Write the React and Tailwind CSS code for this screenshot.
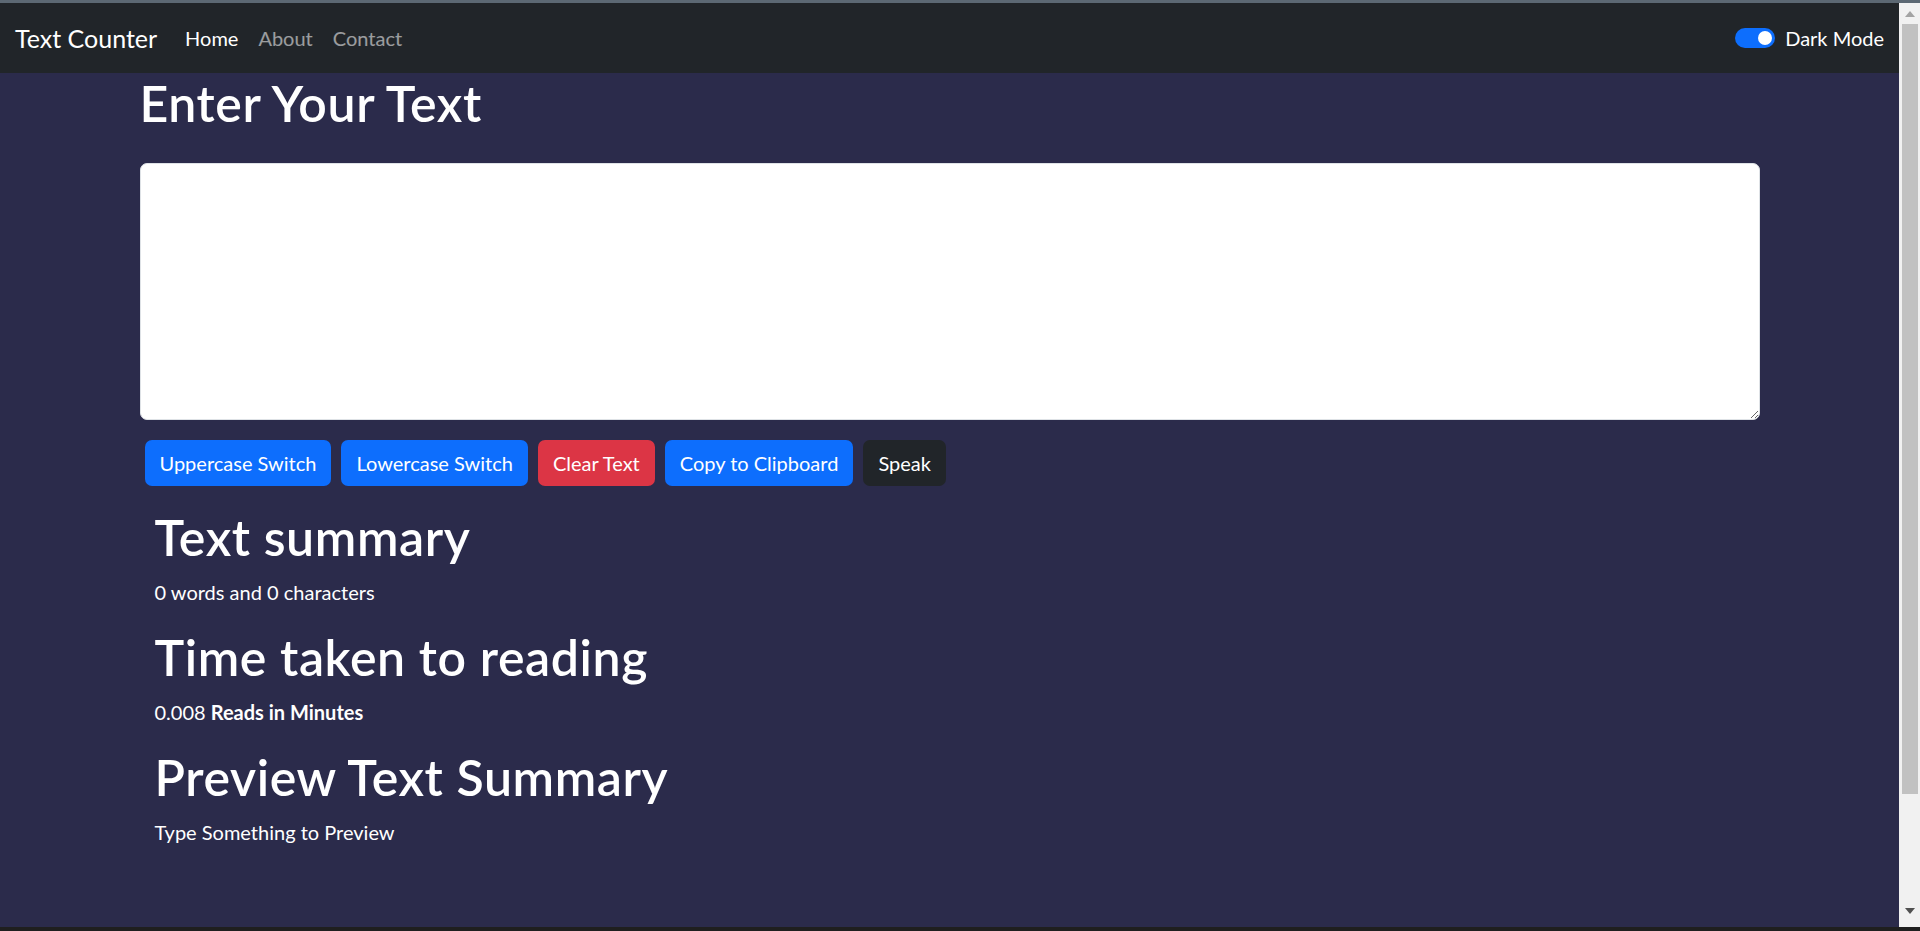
import React, { useState } from "react";

const font = { fontFamily: 'Lato, "Open Sans", sans-serif' };

const buttons = [
  { label: "Uppercase Switch", cls: "bg-[#0d6efd]" },
  { label: "Lowercase Switch", cls: "bg-[#0d6efd]" },
  { label: "Clear Text", cls: "bg-[#dc3545]" },
  { label: "Copy to Clipboard", cls: "bg-[#0d6efd]" },
  { label: "Speak", cls: "bg-[#212529]" },
];

function Navbar() {
  return (
    <nav className="h-[70px] bg-[#212529] flex items-center justify-between px-[15px]">
      <div className="flex items-center">
        <a className="text-[25px] text-white leading-[37px] mr-[18px]">Text Counter</a>
        <ul className="flex items-center text-[20px] leading-[30px]">
          <li className="px-[10px] text-white">Home</li>
          <li className="px-[10px] text-white/55">About</li>
          <li className="px-[10px] text-white/55">Contact</li>
        </ul>
      </div>
      <label className="flex items-center gap-[10px] text-[20px] text-white leading-[30px]">
        <span className="w-[40px] h-[20px] rounded-full bg-[#0d6efd] flex items-center justify-end px-[3px]">
          <span className="w-[14px] h-[14px] rounded-full bg-white" />
        </span>
        Dark Mode
      </label>
    </nav>
  );
}

function Scrollbar() {
  return (
    <div className="w-[21px] bg-[#f1f1f1] flex flex-col items-center">
      <div className="h-[21px] flex items-center justify-center">
        <svg width="10" height="6" viewBox="0 0 10 6">
          <polygon points="5,0 10,6 0,6" fill="#a3a3a3" />
        </svg>
      </div>
      <div className="w-[16px] h-[770px] bg-[#c1c1c1]" />
      <div className="flex-1" />
      <div className="h-[21px] flex items-center justify-center mb-[6px]">
        <svg width="10" height="6" viewBox="0 0 10 6">
          <polygon points="0,0 10,0 5,6" fill="#505050" />
        </svg>
      </div>
    </div>
  );
}

export default function App() {
  const [text, setText] = useState("");
  const words = text.split(/\s+/).filter((w) => w.length).length;
  const h1 = "text-[50px] leading-[60px] font-semibold tracking-[0.6px]";

  return (
    <div className="h-[931px] flex flex-col overflow-hidden bg-[#2b2b4b]" style={font}>
      <div className="h-[3px] bg-[#5c6873]" />
      <div className="flex-1 flex min-h-0">
        <div className="flex-1 flex flex-col min-w-0">
          <Navbar />
          <main className="flex-1 bg-[#2b2b4b] text-white">
            <div className="w-[1650px] mx-auto px-[15px]">
              <h1 className={`${h1} mb-[30px]`}>Enter Your Text</h1>
              <div className="mb-[20px]">
                <textarea
                  rows={8}
                  value={text}
                  onChange={(e) => setText(e.target.value)}
                  className="block w-full h-[257px] bg-white text-[#212529] text-[20px] rounded-[7px] border border-[#dee2e6] px-[15px] py-[7px] outline-none"
                />
              </div>
              <div className="flex">
                {buttons.map((b) => (
                  <button
                    key={b.label}
                    className={`${b.cls} text-white text-[20px] leading-[30px] px-[15px] py-[8px] rounded-[7px] mx-[5px]`}
                  >
                    {b.label}
                  </button>
                ))}
              </div>
              <div className="mt-[21px] px-[15px]">
                <h1 className={`${h1} mb-[10px]`}>Text summary</h1>
                <p className="text-[20px] leading-[30px] mb-[20px]">
                  {words} words and {text.length} characters
                </p>
                <h1 className={`${h1} mb-[10px]`}>Time taken to reading</h1>
                <p className="text-[20px] leading-[30px] mb-[20px]">
                  0.008 <b className="font-bold">Reads in Minutes</b>
                </p>
                <h1 className={`${h1} mb-[10px]`}>Preview Text Summary</h1>
                <p className="text-[20px] leading-[30px] mb-[20px]">
                  {text.length ? text : "Type Something to Preview"}
                </p>
              </div>
            </div>
          </main>
        </div>
        <Scrollbar />
      </div>
      <div className="h-[4px] bg-[#1f1f1f]" />
    </div>
  );
}
